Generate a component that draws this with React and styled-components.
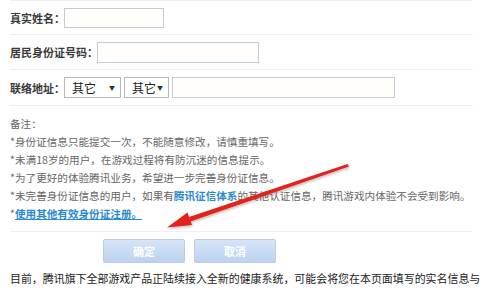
import React from 'react';
import styled, { createGlobalStyle } from 'styled-components';

const GlobalStyle = createGlobalStyle`
  html, body {
    margin: 0;
    padding: 0;
    background: #fff;
  }
  body {
    font-family: "Noto Sans CJK SC", "Noto Sans", sans-serif;
  }
`;

const App = () => {
  return (
    <Page>
      <GlobalStyle />
      <Form>
        <FormRow h={33}>
          <Label>真实姓名：</Label>
          <TextInput w={100} h={20} />
        </FormRow>
        <FormRow h={34}>
          <Label>居民身份证号码：</Label>
          <TextInput w={162} h={21} />
        </FormRow>
        <FormRow h={35}>
          <Label>联络地址：</Label>
          <SelectBox w={57}>
            <span>其它</span>
            <Caret>▼</Caret>
          </SelectBox>
          <SelectBox w={45}>
            <span>其它</span>
            <Caret>▼</Caret>
          </SelectBox>
          <TextInput w={223} h={21} />
        </FormRow>
      </Form>

      <Notes>
        <p>备注：</p>
        <p>*身份证信息只能提交一次，不能随意修改，请慎重填写。</p>
        <p>*未满18岁的用户，在游戏过程将有防沉迷的信息提示。</p>
        <p>*为了更好的体验腾讯业务，希望进一步完善身份证信息。</p>
        <p>
          *未完善身份证信息的用户，如果有<Strong>腾讯征信体系</Strong>的其他认证信息，腾讯游戏内体验不会受到影响。
        </p>
        <p>
          *<LinkText>使用其他有效身份证注册。</LinkText>
        </p>
      </Notes>

      <ButtonRow>
        <Button type="button">确定</Button>
        <Button type="button">取消</Button>
      </ButtonRow>

      <Footer>
        目前，腾讯旗下全部游戏产品正陆续接入全新的健康系统，可能会将您在本页面填写的实名信息与
      </Footer>

      <Arrow viewBox="0 0 498 293" width="498" height="293">
        <defs>
          <filter id="arrowShadow" x="-10%" y="-10%" width="120%" height="130%">
            <feDropShadow dx="1" dy="1.5" stdDeviation="1" floodColor="#000" floodOpacity="0.25" />
          </filter>
        </defs>
        <g filter="url(#arrowShadow)" fill="#e3211c">
          <polygon points="347.5,164 349,166.5 190.5,221.5 189,217" />
          <polygon points="167,227.5 187.5,212.5 192,225" />
        </g>
      </Arrow>
    </Page>
  );
};

export default App;

const Page = styled.div`
  position: relative;
  width: 498px;
  height: 293px;
  overflow: hidden;
  background: #fff;
  color: #333;
`;

const Form = styled.div`
  margin: 0 25px 0 10px;
  border-top: 1px solid #eef0f4;
`;

const FormRow = styled.div`
  display: flex;
  align-items: center;
  gap: 3px;
  height: ${(p) => p.h}px;
  border-bottom: 1px solid #eceef3;
`;

const Label = styled.span`
  font-size: 11px;
  font-weight: 700;
  color: #3a3a3a;
  white-space: nowrap;
  margin-right: -4px;
`;

const TextInput = styled.div`
  box-sizing: border-box;
  width: ${(p) => p.w}px;
  height: ${(p) => p.h}px;
  border: 1px solid #c6cad6;
  background: #fffefa;
`;

const SelectBox = styled.div`
  box-sizing: border-box;
  display: flex;
  align-items: center;
  justify-content: space-between;
  width: ${(p) => p.w}px;
  height: 21px;
  padding: 0 5px 0 7px;
  border: 1px solid #b8b8b8;
  background: #fff;
  font-size: 12px;
  color: #222;
`;

const Caret = styled.span`
  font-size: 6px;
  color: #333;
`;

const Notes = styled.div`
  margin: 0 25px 0 10px;
  padding: 9px 0 8px;
  border-bottom: 1px solid #eef0f4;
  font-size: 10.6px;
  line-height: 18px;
  color: #666;
  white-space: nowrap;

  p {
    margin: 0;
  }
`;

const Strong = styled.b`
  color: #2a8ad0;
`;

const LinkText = styled.a`
  color: #2a8ad0;
  font-weight: 700;
  text-decoration: underline;
`;

const ButtonRow = styled.div`
  display: flex;
  gap: 9px;
  margin-top: 7px;
  padding-left: 103px;
`;

const Button = styled.button`
  width: 82px;
  height: 24px;
  padding: 0;
  border: 1px solid #b9cdea;
  border-radius: 2px;
  background: linear-gradient(#d6e5f8, #bcd2f0);
  color: #fff;
  font-family: "Noto Sans CJK SC", sans-serif;
  font-size: 11px;
  font-weight: 700;
  cursor: pointer;
`;

const Footer = styled.p`
  margin: 6px 0 0 10px;
  font-size: 10.95px;
  line-height: 18px;
  color: #222;
  white-space: nowrap;
`;

const Arrow = styled.svg`
  position: absolute;
  top: 0;
  left: 0;
  pointer-events: none;
`;
